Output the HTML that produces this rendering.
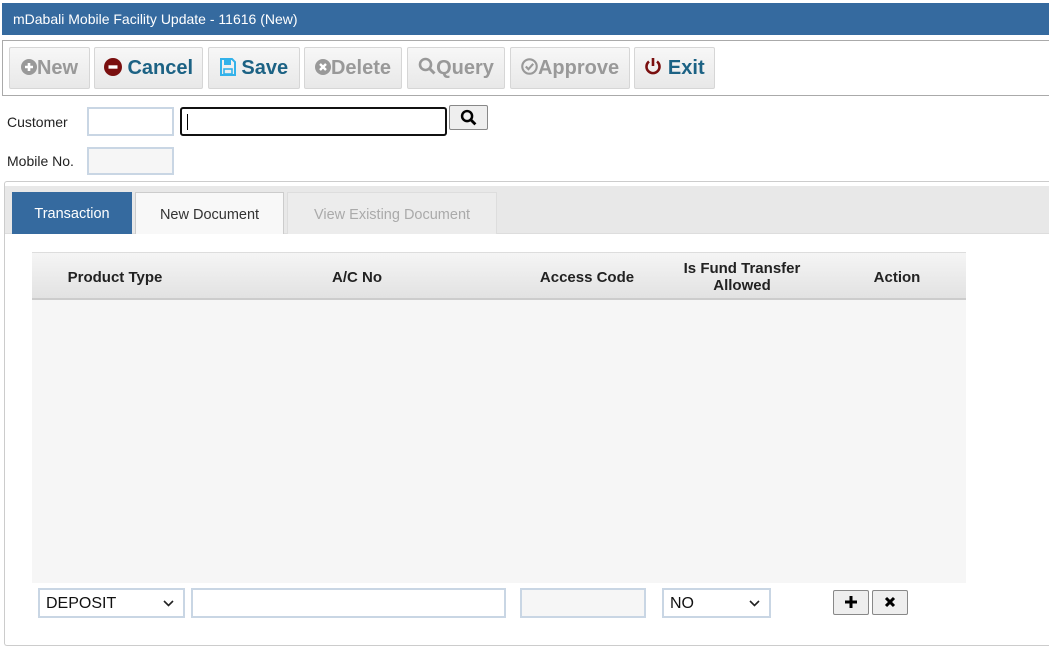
<!DOCTYPE html>
<html><head><meta charset="utf-8"><style>
*{box-sizing:border-box;margin:0;padding:0}
body{width:1049px;height:647px;background:#fff;position:relative;overflow:hidden;font-family:"Liberation Sans",sans-serif}
.a{position:absolute}
.hdr{left:2px;top:3px;width:1047px;height:32px;background:#356a9f;color:#fff;font-size:14px;line-height:32px;padding-left:11px}
.tb{left:2px;top:40px;width:1047px;height:56px;border:1px solid #aaa;border-right:none}
.btn{top:47px;height:42px;background:linear-gradient(#f7f7f7,#e8e8e8);border:1px solid #d6d6d6;border-radius:2px;font-weight:bold;font-size:20px;line-height:40px;text-align:center;color:#1c6284;white-space:nowrap}
.dis{color:#999}
.btn svg{vertical-align:-2px}
.btn.dis svg{vertical-align:-1px}
.lbl{font-size:14px;color:#222}
.in{border:2px solid #c9d6e4;background:#fff}
.tabs{left:5px;top:186px;width:1044px;height:48px;background:#e8e8e8;border-bottom:1px solid #ddd}
.tab{top:192px;height:42px;font-size:14.5px;line-height:44px;text-align:center}
.th{top:252px;left:32px;width:934px;height:48px;background:linear-gradient(#f5f5f5,#e2e2e2);border-top:1px solid #ddd;border-bottom:2px solid #ccc;font-weight:bold;font-size:15px;color:#222}
.th div{position:absolute;text-align:center;line-height:17px}
.sel{font-size:16px;color:#111;padding-left:6px;line-height:28px}
.sel svg{position:absolute;right:9px;top:10px}
.sm{top:590px;height:25px;width:36px;border:1px solid #888;border-radius:2px;background:#eee;text-align:center}
</style></head><body>
<div class="a hdr">mDabali Mobile Facility Update - 11616 (New)</div>
<div class="a tb"></div>
<div class="a btn dis" style="left:9px;width:81px"><svg width="16" height="16" viewBox="0 0 16 16"><circle cx="8" cy="8" r="8" fill="#999"/><path d="M8 4v8M4 8h8" stroke="#fff" stroke-width="2.6"/></svg>New</div>
<div class="a btn" style="left:94px;width:109px"><svg width="18" height="18" viewBox="0 0 16 16"><circle cx="8" cy="8" r="8" fill="#7a0f0f"/><path d="M4 8h8" stroke="#fff" stroke-width="3"/></svg> Cancel</div>
<div class="a btn" style="left:208px;width:92px"><svg width="16" height="18" viewBox="0 0 16 18"><path d="M1 1h11l3 3v13H1z" fill="none" stroke="#33b2ea" stroke-width="2"/><rect x="4" y="2" width="7" height="5" fill="#33b2ea"/><rect x="4" y="11" width="8" height="5" fill="none" stroke="#33b2ea" stroke-width="1.6"/></svg> Save</div>
<div class="a btn dis" style="left:304px;width:98px"><svg width="16" height="16" viewBox="0 0 16 16"><circle cx="8" cy="8" r="8" fill="#999"/><path d="M5 5l6 6M11 5l-6 6" stroke="#fff" stroke-width="2.4"/></svg>Delete</div>
<div class="a btn dis" style="left:407px;width:98px"><svg width="18" height="18" viewBox="0 0 18 18"><circle cx="7.5" cy="7.5" r="5.5" fill="none" stroke="#999" stroke-width="2.6"/><path d="M11.5 11.5l5 5" stroke="#999" stroke-width="3"/></svg>Query</div>
<div class="a btn dis" style="left:510px;width:120px"><svg width="17" height="17" viewBox="0 0 16 16"><circle cx="8" cy="8" r="6.8" fill="none" stroke="#999" stroke-width="2"/><path d="M4.5 8l2.5 2.5 4.5-5" fill="none" stroke="#999" stroke-width="2"/></svg>Approve</div>
<div class="a btn" style="left:634px;width:81px"><svg width="18" height="19" viewBox="0 0 18 19"><path d="M5 4.5A6.5 6.5 0 1 0 13 4.5" fill="none" stroke="#7a0f0f" stroke-width="2.6"/><path d="M9 1v8" stroke="#7a0f0f" stroke-width="2.6"/></svg> Exit</div>

<div class="a lbl" style="left:7px;top:114px">Customer</div>
<div class="a in" style="left:87px;top:107px;width:87px;height:29px"></div>
<div class="a" style="left:180px;top:107px;width:267px;height:29px;border:2px solid #111;border-radius:3px;background:#fff"><div class="a" style="left:5px;top:5px;width:1px;height:16px;background:#000"></div></div>
<div class="a" style="left:449px;top:105px;width:39px;height:25px;border:1px solid #888;border-radius:2px;background:#eee;text-align:center;padding-top:3px"><svg width="17" height="17" viewBox="0 0 18 18"><circle cx="7.5" cy="7.5" r="5.3" fill="none" stroke="#000" stroke-width="2.6"/><path d="M11.3 11.3l5 5" stroke="#000" stroke-width="3"/></svg></div>
<div class="a lbl" style="left:7px;top:153px">Mobile No.</div>
<div class="a in" style="left:87px;top:147px;width:87px;height:28px;background:#f6f6f6"></div>

<div class="a" style="left:4px;top:181px;width:1045px;height:465px;border:1px solid #ccc;border-right:none;border-radius:3px 0 0 3px"></div>
<div class="a tabs"></div>
<div class="a tab" style="left:12px;width:120px;background:#356a9f;color:#fff">Transaction</div>
<div class="a tab" style="left:135px;width:149px;background:#f8f8f8;border:1px solid #ccc;border-bottom:none;color:#333">New Document</div>
<div class="a tab" style="left:287px;width:210px;background:#ececec;border:1px solid #ddd;border-bottom:none;color:#aaa">View Existing Document</div>

<div class="a th">
<div style="left:0;width:166px;top:16px">Product Type</div>
<div style="left:260px;width:130px;top:16px">A/C No</div>
<div style="left:490px;width:130px;top:16px">Access Code</div>
<div style="left:630px;width:160px;top:7px">Is Fund Transfer<br>Allowed</div>
<div style="left:810px;width:110px;top:16px">Action</div>
</div>
<div class="a" style="left:32px;top:300px;width:934px;height:283px;background:#f6f6f6"></div>

<div class="a in sel" style="left:38px;top:588px;width:147px;height:30px">DEPOSIT<svg width="11" height="7" viewBox="0 0 11 7"><path d="M1 1l4.5 4.5L10 1" fill="none" stroke="#222" stroke-width="1.6"/></svg></div>
<div class="a in" style="left:191px;top:588px;width:315px;height:30px"></div>
<div class="a in" style="left:520px;top:588px;width:126px;height:30px;background:#f6f6f6"></div>
<div class="a in sel" style="left:662px;top:588px;width:109px;height:30px">NO<svg width="11" height="7" viewBox="0 0 11 7"><path d="M1 1l4.5 4.5L10 1" fill="none" stroke="#222" stroke-width="1.6"/></svg></div>
<div class="a sm" style="left:833px"><svg width="14" height="14" viewBox="0 0 14 14" style="margin-top:4px"><path d="M7 1v12M1 7h12" stroke="#000" stroke-width="3"/></svg></div>
<div class="a sm" style="left:872px"><svg width="12" height="12" viewBox="0 0 12 12" style="margin-top:5px"><path d="M2 2l8 8M10 2l-8 8" stroke="#000" stroke-width="3"/></svg></div>
</body></html>
